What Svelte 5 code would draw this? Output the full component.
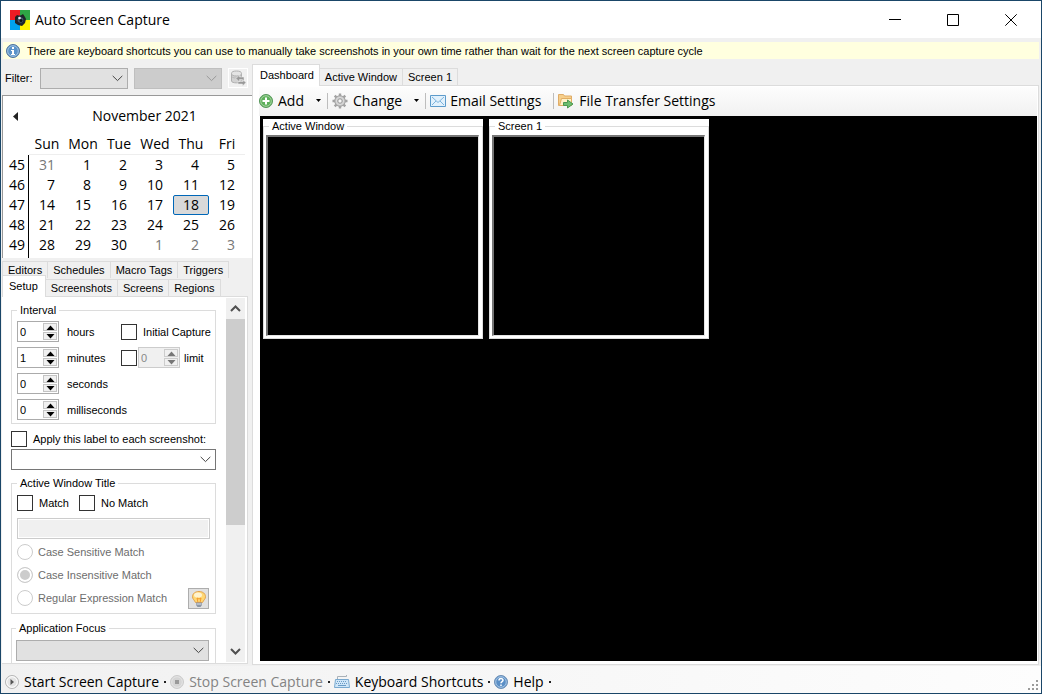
<script>
	const days = ["Sun", "Mon", "Tue", "Wed", "Thu", "Fri"];
	const weeks = [
		{ number: 45, dates: [31, 1, 2, 3, 4, 5] },
		{ number: 46, dates: [7, 8, 9, 10, 11, 12] },
		{ number: 47, dates: [14, 15, 16, 17, 18, 19] },
		{ number: 48, dates: [21, 22, 23, 24, 25, 26] },
		{ number: 49, dates: [28, 29, 30, 1, 2, 3] }
	];
	const backTabs = ["Editors", "Schedules", "Macro Tags", "Triggers"];
	const frontTabs = ["Setup", "Screenshots", "Screens", "Regions"];
	const mainTabs = ["Dashboard", "Active Window", "Screen 1"];
	const screens = ["Active Window", "Screen 1"];
	const matchTypes = ["Case Sensitive Match", "Case Insensitive Match", "Regular Expression Match"];

	let interval = $state([
		{ unit: "hours", value: 0 },
		{ unit: "minutes", value: 1 },
		{ unit: "seconds", value: 0 },
		{ unit: "milliseconds", value: 0 }
	]);
	let limit = $state({ unit: "limit", value: 0 });
	let selectedDay = $state(18);
	let setupTab = $state("Setup");
	let mainTab = $state("Dashboard");
	let matchType = $state("Case Insensitive Match");

	function otherMonth(row, date) {
		return (row === 0 && date > 20) || (row === 4 && date < 20);
	}

	function step(item, amount) {
		item.value = Math.max(0, item.value + amount);
	}
</script>

{#snippet chevron()}
	<svg class="chevron" width="11" height="7" viewBox="0 0 11 7"><path d="M.7.9 5.5 5.6 10.300.9" /></svg>
{/snippet}

{#snippet spinner(item, disabled)}
	<span class="spinner" class:disabled>
		<input type="number" aria-label={item.unit} bind:value={item.value} {disabled}>
		<span class="steps">
			<button aria-label="Increase" {disabled} onclick={() => step(item, 1)}>
				<svg width="9" height="5" viewBox="0 0 9 5"><path d="M.5 5 4.500.5 8.500 5z" /></svg>
			</button>
			<button aria-label="Decrease" {disabled} onclick={() => step(item, -1)}>
				<svg width="9" height="5" viewBox="0 0 9 5"><path d="M.5 0 4.500 4.500 8.500 0z" /></svg>
			</button>
		</span>
	</span>
{/snippet}

<div class="window">
	<header>
		<svg class="logo" width="20" height="20" viewBox="0 0 20 20">
			<path fill="#ee1c24" d="M0 0h10v10H0z" />
			<path fill="#2ea545" d="M10 0h10v10H10z" />
			<path fill="#00a2ee" d="M0 10h10v10H0z" />
			<path fill="#fff000" d="M10 10h10v10H10z" />
			<path fill="#222" d="m5 7 2-2 3 1 3-2 2 3 1 2-1 4-3 3-4-1-3-2z" />
			<circle cx="10.500" cy="10" r="4.500" fill="#1c2530" />
			<circle cx="10.500" cy="10" r="2.800" fill="#46596b" />
			<circle cx="11" cy="10.500" r="1.500" fill="#0c1116" />
			<circle cx="9.500" cy="8" r="1.300" fill="#e8f0f5" />
		</svg>
		<h1>Auto Screen Capture</h1>
		<div class="window-buttons">
			<button aria-label="Minimize"><svg width="12" height="12" viewBox="0 0 12 12"><path d="M0 5.500h12" /></svg></button>
			<button aria-label="Maximize"><svg width="12" height="12" viewBox="0 0 12 12"><path d="M.5.5h11v11H.5z" /></svg></button>
			<button aria-label="Close"><svg width="12" height="12" viewBox="0 0 12 12"><path d="m.3.3 11.400 11.400M11.700.3.3 11.700" /></svg></button>
		</div>
	</header>

	<div class="info">
		<svg width="14" height="14" viewBox="0 0 14 14">
			<circle cx="7" cy="7" r="6.500" fill="#5b93c9" stroke="#50749c" />
			<circle cx="7" cy="7" r="5.300" fill="none" stroke="#b4d0ea" stroke-width=".8" />
			<path fill="#fff" d="M6 3h2v2H6zM5 6h3v4h1v1H5v-1h1V7H5z" />
		</svg>
		<span>There are keyboard shortcuts you can use to manually take screenshots in your own time rather than wait for the next screen capture cycle</span>
	</div>

	<main>
		<aside>
			<div class="filter">
				<label for="filter-type">Filter:</label>
				<span class="combo grey"><select id="filter-type"><option></option></select>{@render chevron()}</span>
				<span class="combo grey off"><select aria-label="Filter value" disabled><option></option></select>{@render chevron()}</span>
				<button class="refresh" aria-label="Refresh filter">
					<svg width="16" height="16" viewBox="0 0 16 16">
						<path fill="#d2d2d2" stroke="#b0b0b0" d="M1.500 3.500v7.500c0 2.500 10 2.500 10 0V3.500" />
						<ellipse cx="6.500" cy="3.500" rx="5" ry="2.500" fill="#e4e4e4" stroke="#b0b0b0" />
						<path fill="none" stroke="#bbb" d="M2 7c2 1.500 7 1.500 9 0" />
						<path fill="#999" stroke="#eee" stroke-width=".5" d="M6 8.500 9.500 5v2H14v4h-2V9.500H9.500V12zM16 12.500 12.500 16v-2H8v-2.500h4.500V9.500z" />
					</svg>
				</button>
			</div>

			<div class="calendar">
				<div class="month">
					<button aria-label="Previous month"><svg width="5" height="9" viewBox="0 0 5 9"><path fill="#222" d="M5 0v9L0 4.500z" /></svg></button>
					<span>November 2021</span>
				</div>
				<table>
					<thead>
						<tr><td></td>{#each days as day}<th>{day}</th>{/each}</tr>
					</thead>
					<tbody>
						{#each weeks as week, row}
							<tr>
								<th>{week.number}</th>
								{#each week.dates as date}
									<td>
										<button
											class:muted={otherMonth(row, date)}
											class:selected={date === selectedDay}
											onclick={() => (selectedDay = date)}
										>{date}</button>
									</td>
								{/each}
							</tr>
						{/each}
					</tbody>
				</table>
			</div>

			<nav class="setup-tabs">
				<div class="tabs">
					{#each backTabs as tab}
						<button onclick={() => (setupTab = tab)}>{tab}</button>
					{/each}
				</div>
				<div class="tabs">
					{#each frontTabs as tab}
						<button class:active={setupTab === tab} onclick={() => (setupTab = tab)}>{tab}</button>
					{/each}
				</div>
			</nav>

			<section class="setup">
				<div class="settings">
					<fieldset>
						<legend>Interval</legend>
						<div class="intervals">
							{#each interval as item, i}
								<div class="row">
									{@render spinner(item, false)}
									<span class="unit">{item.unit}</span>
									{#if i === 0}
										<label class="check"><input type="checkbox"> Initial Capture</label>
									{:else if i === 1}
										<span class="limit">
											<input type="checkbox" aria-label="Limit captures">
											{@render spinner(limit, true)}
											<span>limit</span>
										</span>
									{/if}
								</div>
							{/each}
						</div>
					</fieldset>

					<label class="check apply"><input type="checkbox"> Apply this label to each screenshot:</label>
					<span class="combo"><select aria-label="Label"><option></option></select>{@render chevron()}</span>

					<fieldset class="title-match">
						<legend>Active Window Title</legend>
						<div class="checks">
							<label class="check"><input type="checkbox"> Match</label>
							<label class="check"><input type="checkbox"> No Match</label>
						</div>
						<input class="pattern" type="text" aria-label="Window title" disabled>
						<div class="match-types">
							<div>
								{#each matchTypes as type}
									<label class="radio"><input type="radio" name="match" value={type} bind:group={matchType} disabled> {type}</label>
								{/each}
							</div>
							<button class="bulb" aria-label="Show help">
								<svg width="16" height="16" viewBox="0 0 16 16">
									<path fill="#ffd773" stroke="#e2a14c" d="M8 .5c4 0 6.500 2.300 6.500 5.200 0 2.500-2 3.400-3 5.800h-7c-1-2.400-3-3.300-3-5.800C1.500 2.800 4 .5 8 .5z" />
									<ellipse cx="7" cy="4" rx="4" ry="2.600" fill="#fff3cf" />
									<path fill="none" stroke="#f39a2c" d="m6 7 1 4.500M10 7l-1 4.500M6 7l2 1 2-1" />
									<path fill="#8c96a3" d="M5 11.500h6V14l-1.500 2h-3L5 14z" />
									<path stroke="#dfe3e8" d="M5.500 13h5" />
								</svg>
							</button>
						</div>
					</fieldset>

					<fieldset class="focus">
						<legend>Application Focus</legend>
						<span class="combo grey"><select aria-label="Application"><option></option></select>{@render chevron()}</span>
					</fieldset>
				</div>
				<div class="scrollbar">
					<button aria-label="Scroll up"><svg width="11" height="7" viewBox="0 0 11 7"><path d="M1 6 5.500 1.500 10 6" /></svg></button>
					<div class="track"><div class="thumb"></div></div>
					<button aria-label="Scroll down"><svg width="11" height="7" viewBox="0 0 11 7"><path d="M1 1 5.500 5.500 10 1" /></svg></button>
				</div>
			</section>
		</aside>

		<section class="content">
			<div class="tabs main-tabs">
				{#each mainTabs as tab}
					<button class:active={mainTab === tab} onclick={() => (mainTab = tab)}>{tab}</button>
				{/each}
			</div>
			<div class="page">
				<div class="toolbar">
					<button>
						<svg width="14" height="14" viewBox="0 0 14 14">
							<circle cx="7" cy="7" r="6.500" fill="#5eb05c" stroke="#56965a" />
							<circle cx="7" cy="7" r="5.300" fill="none" stroke="#b5dcae" stroke-width=".8" />
							<path fill="#fff" d="M6 3.500h2V6h2.500v2H8v2.500H6V8H3.500V6H6z" />
						</svg>
						Add
						<svg class="drop" width="5" height="3" viewBox="0 0 5 3"><path d="M0 0h5L2.500 3z" /></svg>
					</button>
					<button>
						<svg width="16" height="16" viewBox="0 0 16 16">
							<g stroke="#a2a2a2" stroke-width="2.400">
								<path d="M8 .5v15M.5 8h15M2.700 2.700l10.600 10.600M13.300 2.700 2.700 13.300" />
							</g>
							<circle cx="8" cy="8" r="5.300" fill="#c8c8c8" stroke="#a2a2a2" />
							<circle cx="8" cy="8" r="3.600" fill="none" stroke="#ddd" />
							<circle cx="8" cy="8" r="2.200" fill="#f8f8f8" stroke="#999" />
						</svg>
						Change
						<svg class="drop" width="5" height="3" viewBox="0 0 5 3"><path d="M0 0h5L2.500 3z" /></svg>
					</button>
					<button class="email">
						<svg width="16" height="12" viewBox="0 0 16 12">
							<path fill="#e2f1fc" stroke="#5d9bcb" d="M.5.5h15v11H.5z" />
							<path fill="none" stroke="#7db3dc" d="m2 2 6 5.500L14 2M2 10l4-4M14 10l-4-4" />
						</svg>
						Email Settings
					</button>
					<button>
						<svg width="16" height="16" viewBox="0 0 16 16">
							<path fill="#f6cf8b" stroke="#dfac68" d="M.5 12.500v-11h5l1 1.500h7v9.500z" />
							<path fill="#fff1c9" stroke="#e2ad62" d="M3.500 5.500h10v7h-12z" />
							<path fill="#6cbd70" stroke="#4b9850" d="M5.500 9.500h4v-2.500l5.500 4-5.500 4v-2.500h-4z" />
						</svg>
						File Transfer Settings
					</button>
				</div>
				<div class="screens">
					{#each screens as screen}
						<div class="screen">
							<fieldset>
								<legend>{screen}</legend>
								<div class="preview"></div>
							</fieldset>
						</div>
					{/each}
				</div>
			</div>
		</section>
	</main>

	<footer>
		<button>
			<svg width="14" height="14" viewBox="0 0 14 14">
				<circle cx="7" cy="7" r="6.500" fill="#e4e4e4" stroke="#b5b5b5" />
				<circle cx="7" cy="7" r="5.300" fill="none" stroke="#fff" />
				<path fill="#555" d="M5.500 4 9 7l-3.500 3z" />
			</svg>
			Start Screen Capture
		</button>
		<button disabled>
			<svg width="14" height="14" viewBox="0 0 14 14">
				<circle cx="7" cy="7" r="6.500" fill="#d5d5d5" stroke="#ccc" />
				<circle cx="7" cy="7" r="5.300" fill="none" stroke="#e4e4e4" />
				<path fill="#999" d="M5 5h4v4H5z" />
			</svg>
			Stop Screen Capture
		</button>
		<button>
			<svg width="16" height="14" viewBox="0 0 16 14">
				<path fill="none" stroke="#a9b1b8" d="M3.500 4V1.500h9V0" />
				<path fill="#cfe6f8" stroke="#79a9cf" d="M1.500 4.500h13l1 8H.5z" />
				<path fill="none" stroke="#6a9cc6" stroke-dasharray="1 1" d="M3 6.500h10M2 8.500h12" />
				<path fill="none" stroke="#6a9cc6" d="M4 10.500h8" />
			</svg>
			Keyboard Shortcuts
		</button>
		<button>
			<svg width="14" height="14" viewBox="0 0 14 14">
				<circle cx="7" cy="7" r="6.500" fill="#5b8fc6" stroke="#6d8fb5" />
				<circle cx="7" cy="7" r="5.300" fill="none" stroke="#bdd5ec" stroke-width=".8" />
				<path fill="none" stroke="#fff" stroke-width="1.500" d="M5 5.500C5 3 9 3 9 5.300 9 6.700 7 6.500 7 8.300M7 9.500V11" />
			</svg>
			Help
		</button>
		<svg class="grip" width="10" height="10" viewBox="0 0 10 10">
			<path fill="#9b9b9b" d="M8 0h2v2H8zM4 4h2v2H4zM8 4h2v2H8zM0 8h2v2H0zM4 8h2v2H4zM8 8h2v2H8z" />
		</svg>
	</footer>
</div>

<style>
	:global(body) {
		margin: 0;
	}

	.window {
		height: 100vh;
		box-sizing: border-box;
		display: flex;
		flex-direction: column;
		border: 1px solid #1a4668;
		background: #f0f0f0;
		color: #000;
		font: 11px/14px "Liberation Sans", Arial, sans-serif;
	}

	.window :global(*) {
		box-sizing: border-box;
	}

	button, input, select {
		font: inherit;
		color: inherit;
		margin: 0;
		padding: 0;
		border-radius: 0;
	}

	button {
		border: none;
		background: none;
		white-space: nowrap;
	}

	svg {
		display: block;
		flex: none;
	}

	header {
		height: 37px;
		flex: none;
		display: flex;
		align-items: center;
		padding-left: 9px;
		background: #fff;
	}

	h1 {
		flex: 1;
		margin: 0 0 0 5px;
		font: 14px/20px "Open Sans", "Noto Sans", sans-serif;
	}

	.window-buttons {
		display: flex;
		padding-right: 1px;
	}

	.window-buttons button {
		width: 58px;
		height: 36px;
		display: grid;
		place-items: center;
	}

	.window-buttons svg {
		fill: none;
		stroke: #000;
	}

	.info {
		height: 17px;
		flex: none;
		display: flex;
		align-items: center;
		gap: 7px;
		margin: 4px 2px 0;
		padding-left: 3px;
		background: #ffffdf;
		white-space: nowrap;
	}

	main {
		flex: 1;
		min-height: 0;
		display: flex;
	}

	aside {
		width: 251px;
		flex: none;
		display: flex;
		flex-direction: column;
		padding-left: 1px;
	}

	.filter {
		display: flex;
		align-items: center;
		gap: 6px;
		height: 36px;
		padding: 2px 2px 0 3px;
	}

	.filter label {
		width: 29px;
	}

	.filter .combo {
		width: 88px;
	}

	.combo {
		display: grid;
		height: 21px;
		align-items: center;
	}

	.combo select {
		grid-area: 1 / 1;
		width: 100%;
		height: 21px;
		border: 1px solid #767676;
		background: #fff;
		appearance: none;
	}

	.combo.grey select {
		border-color: #adadad;
		background: #e1e1e1;
	}

	.combo.off select {
		border-color: #bfbfbf;
		background: #ccc;
		opacity: 1;
	}

	.chevron {
		grid-area: 1 / 1;
		justify-self: end;
		margin-right: 5px;
		fill: none;
		stroke: #444;
		pointer-events: none;
	}

	.off .chevron {
		stroke: #999;
	}

	.refresh {
		width: 20px;
		height: 20px;
		display: grid;
		place-items: center;
		border: 1px solid #fff;
	}

	.calendar {
		height: 163px;
		flex: none;
		border-top: 1px solid #999;
		border-left: 1px solid #999;
		background: #fff;
		font: 14px/20px "Open Sans", "Noto Sans", sans-serif;
	}

	.month {
		display: flex;
		align-items: center;
		height: 38px;
		padding: 2px 0 0 10px;
	}

	.month span {
		flex: 1;
		padding-left: 19px;
		text-align: center;
	}

	table {
		table-layout: fixed;
		width: 242px;
		border-collapse: separate;
		border-spacing: 0;
	}

	th, td {
		width: 36px;
		height: 20px;
		padding: 0;
		font-weight: normal;
		text-align: center;
		vertical-align: top;
	}

	thead td {
		width: 26px;
	}

	thead th {
		border-bottom: 1px solid #eee;
	}

	tbody th {
		padding-left: 3px;
		border-right: 1px solid #000;
	}

	tbody tr:last-child th {
		height: 23px;
	}

	td button {
		display: block;
		width: 36px;
		height: 20px;
		padding-right: 9px;
		border: 1px solid transparent;
		border-radius: 2px;
		line-height: 18px;
		text-align: right;
	}

	td button.muted {
		color: #777;
	}

	td button.selected {
		border-color: #0067b8;
		background: #d9d9d9;
	}

	.setup-tabs {
		flex: none;
		padding-top: 2px;
	}

	.setup-tabs .tabs {
		height: 18px;
	}

	/* lets the active tab cover the page border */
	.tabs {
		display: flex;
		align-items: flex-end;
		position: relative;
		z-index: 1;
	}

	.tabs button {
		height: 17px;
		padding: 0 5px;
		border: 1px solid #dcdcdc;
		border-left: none;
		border-bottom: none;
	}

	.tabs button:first-child {
		border-left: 1px solid #dcdcdc;
	}

	.tabs button.active {
		height: 22px;
		margin-bottom: -1px;
		padding: 0 7px 1px 6px;
		background: #fff;
	}

	.setup {
		flex: 1;
		min-height: 0;
		display: flex;
		margin: 0 4px 2px 0;
		border: 1px solid #dcdcdc;
		border-left: none;
		background: #fff;
	}

	.settings {
		flex: 1;
		overflow: hidden;
		padding: 6px 10px 0 9px;
	}

	fieldset {
		min-width: 0;
		margin: 0;
		border: 1px solid #dcdcdc;
	}

	legend {
		padding: 0 3px;
	}

	.settings fieldset {
		padding: 4px 5px 3px;
	}

	.settings .title-match {
		margin-top: 6px;
	}

	.settings .focus {
		margin-top: 7px;
		padding: 5px 6px 9px 4px;
	}

	.intervals {
		display: grid;
		gap: 5px;
	}

	.row {
		display: flex;
		align-items: center;
		gap: 8px;
	}

	.unit {
		width: 46px;
	}

	.row, .check, .radio {
		white-space: nowrap;
	}

	.check, .radio {
		display: flex;
		align-items: center;
		gap: 6px;
	}

	.limit {
		display: flex;
		align-items: center;
		gap: 1px;
	}

	.limit > span:last-child {
		padding-left: 3px;
	}

	input[type="checkbox"], input[type="radio"] {
		width: 16px;
		height: 16px;
		flex: none;
		appearance: none;
		border: 1px solid #333;
		background: #fff;
	}

	input[type="checkbox"]:checked {
		background: #333;
		box-shadow: inset 0 0 0 3px #fff;
	}

	input[type="radio"] {
		border-color: #ccc;
		border-radius: 50%;
	}

	input[type="radio"]:checked {
		background: #ccc;
		box-shadow: inset 0 0 0 2px #fff;
	}

	.spinner {
		display: flex;
		width: 42px;
		height: 21px;
		padding: 1px;
		border: 1px solid #ababab;
		background: #fff;
	}

	.spinner input {
		width: 24px;
		border: none;
		background: none;
		padding-left: 1px;
		outline: none;
		appearance: textfield;
	}

	.spinner input::-webkit-inner-spin-button {
		display: none;
	}

	.steps {
		flex: 1;
		display: grid;
		grid-template-rows: 1fr 1fr;
		gap: 1px;
	}

	.steps button {
		display: grid;
		place-items: center;
		border: 1px solid #c4c4c4;
		background: #f0f0f0;
	}

	.spinner.disabled {
		border-color: #ccc;
		background: #f0f0f0;
		color: #888;
	}

	.disabled .steps button {
		border-color: #ccc;
	}

	.disabled svg {
		fill: #777;
	}

	.apply {
		margin: 7px 0 2px;
	}

	.checks {
		display: flex;
		gap: 10px;
		padding-top: 1px;
	}

	.pattern {
		display: block;
		width: 100%;
		height: 21px;
		margin: 7px 0 1px;
		border: 1px solid #ccc;
		background: #f0f0f0;
		box-shadow: inset 0 0 0 1px #fff;
	}

	.match-types {
		display: flex;
		align-items: flex-end;
		justify-content: space-between;
		padding: 0 1px 1px 0;
	}

	.radio {
		height: 23px;
		gap: 5px;
		color: #6d6d6d;
	}

	.bulb {
		width: 21px;
		height: 21px;
		display: grid;
		place-items: center;
		border: 1px solid #adadad;
		background: #e1e1e1;
	}

	.scrollbar {
		width: 21px;
		display: flex;
		flex-direction: column;
		padding: 1px 2px 1px 0;
	}

	.scrollbar button {
		height: 21px;
		display: grid;
		place-items: center;
		background: #f0f0f0;
	}

	.scrollbar svg {
		fill: none;
		stroke: #505050;
		stroke-width: 2;
	}

	.track {
		flex: 1;
		background: #f0f0f0;
	}

	.thumb {
		height: 64%;
		background: #cdcdcd;
	}

	.content {
		flex: 1;
		min-width: 0;
		display: flex;
		flex-direction: column;
		padding: 5px 2px 1px 0;
	}

	.main-tabs {
		height: 21px;
	}

	.main-tabs button.active {
		padding: 0 5px 1px 7px;
	}

	.page {
		flex: 1;
		min-height: 0;
		display: flex;
		flex-direction: column;
		padding: 1px 1px 3px 7px;
		border: 1px solid #dcdcdc;
		background: #fff;
	}

	.toolbar {
		height: 29px;
		flex: none;
		display: flex;
		align-items: center;
		margin-left: -1px;
		padding-bottom: 2px;
		background: linear-gradient(#fdfdfd, #f1f1f1);
	}

	.toolbar button, footer button {
		display: flex;
		align-items: center;
		gap: 5px;
		font: 14px/20px "Open Sans", "Noto Sans", sans-serif;
	}

	.toolbar button + button {
		padding-left: 4px;
		margin-left: 6px;
		border-left: 1px solid #bdbdbd;
		height: 16px;
	}

	.toolbar .email {
		padding-right: 6px;
		gap: 4px;
	}

	.drop {
		margin-left: 7px;
	}

	.screens {
		flex: 1;
		display: flex;
		flex-wrap: wrap;
		align-content: flex-start;
		gap: 6px;
		padding: 3px;
		background: #000;
	}

	.screen {
		width: 220px;
		background: #fff;
	}

	.screens fieldset {
		padding: 2px 3px 2px 2px;
	}

	.screens legend {
		margin-left: 3px;
	}

	.preview {
		height: 201px;
		border: 2px solid #777;
		border-right: 1px solid #e3e3e3;
		border-bottom: 1px solid #e3e3e3;
		background: #000;
	}

	footer {
		height: 27px;
		flex: none;
		display: flex;
		align-items: center;
		padding: 4px 3px 0 4px;
		background: linear-gradient(90deg, #f1f1f1, #fdfdfd);
	}

	footer button::after {
		content: "";
		width: 2px;
		height: 2px;
		margin-right: 4px;
		background: #222;
	}

	footer button:disabled {
		color: #838383;
	}

	.grip {
		align-self: flex-end;
		margin: 0 0 3px auto;
	}
</style>
